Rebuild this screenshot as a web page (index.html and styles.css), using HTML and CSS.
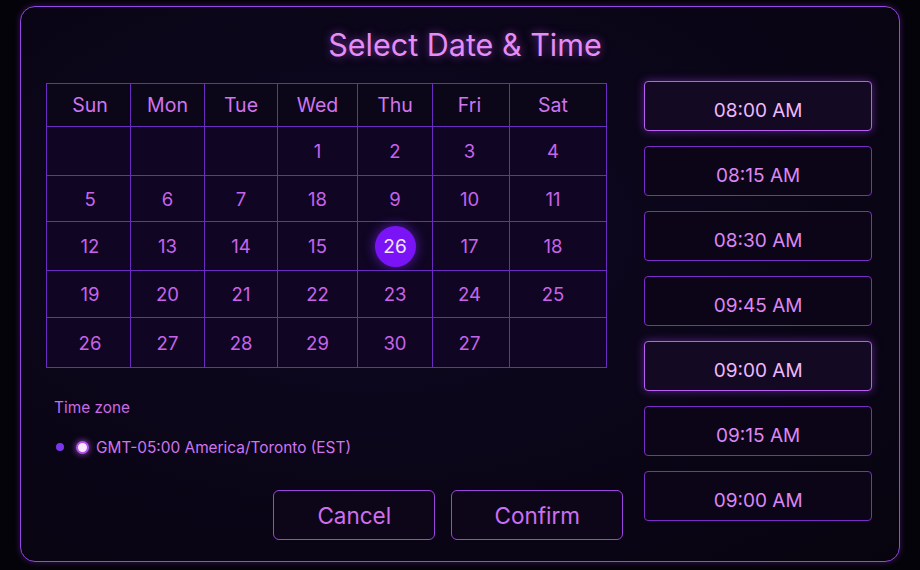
FILE: index.html
```html
<!DOCTYPE html>
<html lang="en">
<head>
<meta charset="utf-8">
<title>Select Date &amp; Time</title>
<link rel="stylesheet" href="styles.css">
</head>
<body>
<div class="card">
  <h1 class="title">Select Date &amp; Time</h1>
  <div class="main">
    <div class="left">
      <div class="calendar">
        <div class="hd">Sun</div><div class="hd">Mon</div><div class="hd">Tue</div><div class="hd">Wed</div><div class="hd">Thu</div><div class="hd">Fri</div><div class="hd">Sat</div>
        <div class="d"></div><div class="d"></div><div class="d"></div><div class="d">1</div><div class="d">2</div><div class="d">3</div><div class="d">4</div>
        <div class="d">5</div><div class="d">6</div><div class="d">7</div><div class="d">18</div><div class="d">9</div><div class="d">10</div><div class="d">11</div>
        <div class="d">12</div><div class="d">13</div><div class="d">14</div><div class="d">15</div><div class="d"><span class="sel">26</span></div><div class="d">17</div><div class="d">18</div>
        <div class="d">19</div><div class="d">20</div><div class="d">21</div><div class="d">22</div><div class="d">23</div><div class="d">24</div><div class="d">25</div>
        <div class="d">26</div><div class="d">27</div><div class="d">28</div><div class="d">29</div><div class="d">30</div><div class="d">27</div><div class="d"></div>
      </div>
      <div class="tz">
        <div class="tz-label">Time zone</div>
        <div class="tz-row">
          <span class="dot"></span>
          <span class="radio"></span>
          <span class="tz-text">GMT-05:00 America/Toronto (EST)</span>
        </div>
      </div>
      <div class="actions">
        <button class="btn btn-cancel">Cancel</button>
        <button class="btn btn-confirm">Confirm</button>
      </div>
    </div>
    <div class="slots">
      <div class="slot active">08:00 AM</div>
      <div class="slot">08:15 AM</div>
      <div class="slot">08:30 AM</div>
      <div class="slot">09:45 AM</div>
      <div class="slot active">09:00 AM</div>
      <div class="slot">09:15 AM</div>
      <div class="slot">09:00 AM</div>
    </div>
  </div>
</div>
</body>
</html>
```
FILE: styles.css
```css
* { box-sizing: border-box; }
html, body { margin: 0; padding: 0; }
body {
  width: 920px;
  height: 570px;
  background: #05030a;
  font-family: "Inter", "Lato", sans-serif;
  overflow: hidden;
}
.card {
  margin: 6px 0 0 20px;
  width: 880px;
  height: 556px;
  border: 1px solid #9647e6;
  border-radius: 15px;
  background: radial-gradient(ellipse at 40% 40%, #0e0822 0%, #0a0516 60%, #07040f 100%);
  box-shadow: 0 0 6px rgba(140, 60, 230, 0.35);
  padding: 0 27px 0 25px;
}
.title {
  margin: 0;
  padding: 19px 0 0 12px;
  height: 75px;
  text-align: center;
  font-weight: 400;
  font-size: 30.5px;
  line-height: 38px;
  color: #e58cf6;
  text-shadow: 0 0 8px rgba(205, 90, 255, 0.55);
}
.main {
  display: flex;
  gap: 21px;
}
.left {
  width: 578px;
  display: flex;
  flex-direction: column;
}
.calendar {
  width: 561px;
  display: grid;
  grid-template-columns: 83px 73px 72px 79px 74px 76px 96px;
  grid-template-rows: 42px 48px 45px 48px 46px 49px;
  gap: 1px;
  padding: 1px;
  background: #6a2bc0;
  margin-top: 1px;
}
.hd, .d {
  display: flex;
  align-items: center;
  justify-content: center;
}
.hd:nth-child(7n+1), .d:nth-child(7n+1) { padding-left: 3px; }
.hd:nth-child(7n+6), .d:nth-child(7n+6) { padding-right: 3px; }
.hd:nth-child(7n), .d:nth-child(7n) { padding-right: 10px; }
.hd {
  font-size: 19.5px;
  color: #d074f0;
  background: #0c0619;
}
.d {
  font-size: 18.5px;
  color: #c763ea;
  background: #100623;
}
.sel {
  width: 41px;
  height: 41px;
  border-radius: 50%;
  background: #7a14f6;
  color: #f4e6ff;
  display: flex;
  align-items: center;
  justify-content: center;
  font-size: 19px;
  box-shadow: 0 0 12px rgba(130, 40, 255, 0.65);
}
.tz {
  padding-left: 8px;
  margin-top: 29px;
}
.tz-label {
  font-size: 15.4px;
  line-height: 22px;
  color: #c96ae9;
}
.tz-row {
  margin-top: 17px;
  display: flex;
  align-items: center;
  height: 22px;
}
.dot {
  width: 8px;
  height: 8px;
  border-radius: 50%;
  background: #7b36ea;
  margin-left: 2px;
}
.radio {
  width: 13px;
  height: 13px;
  border-radius: 50%;
  background: #fbe8ff;
  border: 2px solid #b44ff0;
  margin-left: 12px;
  box-shadow: 0 0 6px rgba(200, 100, 255, 0.8);
}
.tz-text {
  margin-left: 7px;
  font-size: 15.4px;
  color: #cf74ee;
}
.actions {
  margin-top: 32px;
  display: flex;
  justify-content: flex-end;
  gap: 16px;
}
.btn {
  height: 50px;
  border: 1px solid #9a45de;
  border-radius: 6px;
  background: #0d0619;
  color: #cd6ff0;
  font-family: inherit;
  font-size: 22.5px;
  padding: 0;
}
.btn-cancel { width: 162px; }
.btn-confirm { width: 172px; }
.slots {
  width: 228px;
  display: flex;
  flex-direction: column;
  gap: 15px;
  margin-top: -1px;
}
.slot {
  height: 50px;
  border: 1px solid #7a2dc6;
  border-radius: 4px;
  background: #0b0517;
  display: flex;
  align-items: center;
  justify-content: center;
  font-size: 19px;
  color: #dc86f4;
  padding-top: 8px;
}
.slot.active {
  border-color: #b95ef2;
  background: #130923;
  color: #eeb8fb;
  box-shadow: 0 0 10px rgba(170, 70, 255, 0.45);
}
```
